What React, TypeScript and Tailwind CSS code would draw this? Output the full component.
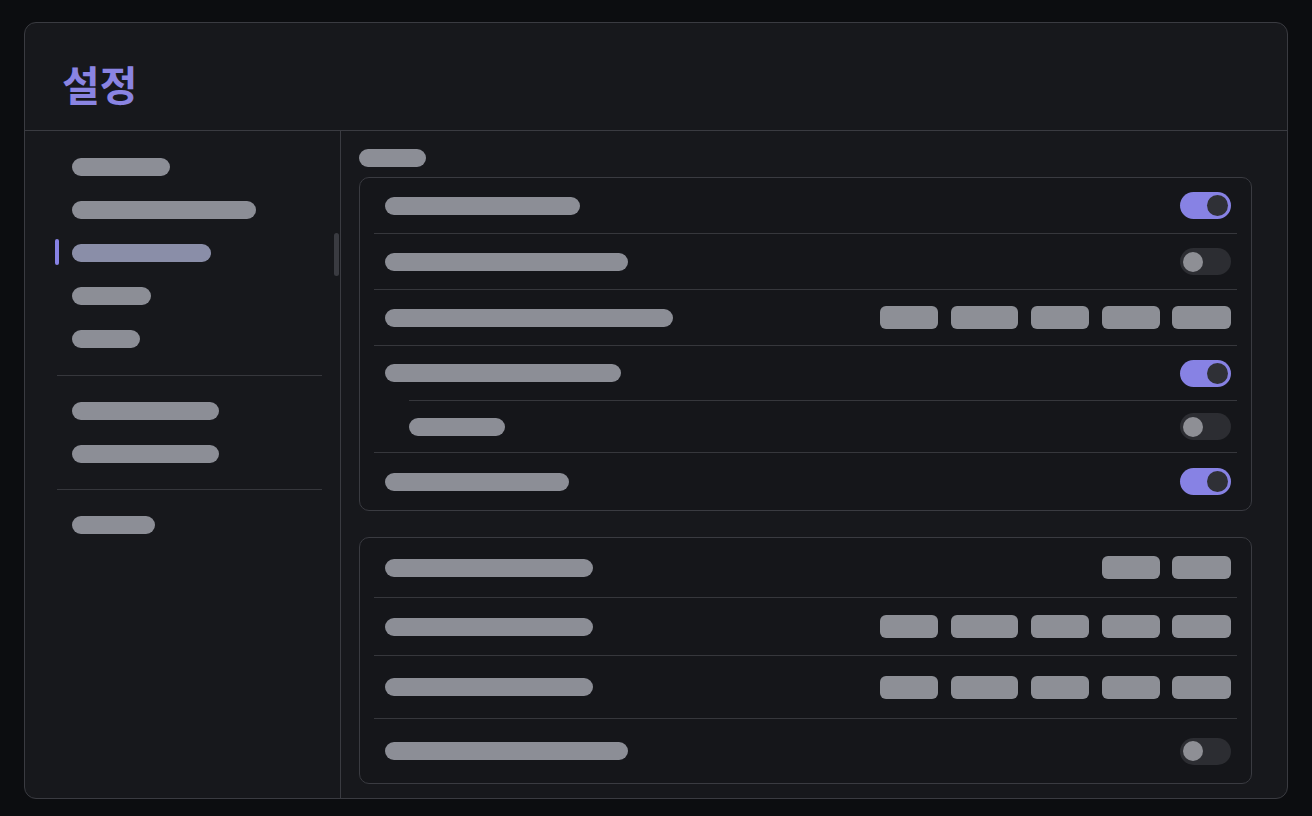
import React from 'react';

type Row =
  | { kind: 'toggle'; label: number; on: boolean; h: string; indent?: boolean }
  | { kind: 'chips'; label: number; chips: number[]; h: string };

const navTop = [98, 184, 139, 79, 68];
const navMid = [147, 147];
const navBottom = [83];

const cardOne: Row[] = [
  { kind: 'toggle', label: 195, on: true, h: 'h-[55px]' },
  { kind: 'toggle', label: 243, on: false, h: 'h-[56px]' },
  { kind: 'chips', label: 288, chips: [58, 67, 58, 58, 59], h: 'h-[56px]' },
  { kind: 'toggle', label: 236, on: true, h: 'h-[55px]' },
  { kind: 'toggle', label: 96, on: false, h: 'h-[52px]', indent: true },
  { kind: 'toggle', label: 184, on: true, h: 'h-[58px]' },
];

const cardTwo: Row[] = [
  { kind: 'chips', label: 208, chips: [58, 59], h: 'h-[59px]' },
  { kind: 'chips', label: 208, chips: [58, 67, 58, 58, 59], h: 'h-[58px]' },
  { kind: 'chips', label: 208, chips: [58, 67, 58, 58, 59], h: 'h-[63px]' },
  { kind: 'toggle', label: 243, on: false, h: 'h-[65px]' },
];

function Pill({ w, active = false }: { w: number; active?: boolean }) {
  return (
    <div
      className={`h-[18px] rounded-full ${active ? 'bg-[#8a8ea8]' : 'bg-[#8c8e96]'}`}
      style={{ width: w }}
    />
  );
}

function Toggle({ on }: { on: boolean }) {
  if (on) {
    return (
      <div className="flex h-[27px] w-[51px] items-center justify-end rounded-full bg-[#8782e4] pr-[3px]">
        <div className="h-[21px] w-[21px] rounded-full bg-[#2f3036]" />
      </div>
    );
  }
  return (
    <div className="flex h-[27px] w-[51px] items-center rounded-full bg-[#2c2d32] pl-[3px]">
      <div className="h-[20px] w-[20px] rounded-full bg-[#8e8f95]" />
    </div>
  );
}

function NavItem({ w, active = false }: { w: number; active?: boolean }) {
  return (
    <div className="relative flex h-[43px] items-center pl-[47px]">
      {active && (
        <div className="absolute left-[30px] top-[8px] h-[26px] w-[4px] rounded-full bg-[#8782e4]" />
      )}
      <Pill w={w} active={active} />
    </div>
  );
}

function Card({ rows }: { rows: Row[] }) {
  return (
    <div className="rounded-[10px] border border-[#3a3b41] bg-[#15161a] px-[14px]">
      {rows.map((row, i) => (
        <div
          key={i}
          className={`${row.h} flex items-center justify-between pr-[6px] ${
            i > 0 ? 'border-t border-[#36373c]' : ''
          } ${row.kind === 'toggle' && row.indent ? 'ml-[35px]' : 'pl-[11px]'}`}
        >
          <Pill w={row.label} />
          {row.kind === 'toggle' ? (
            <Toggle on={row.on} />
          ) : (
            <div className="flex gap-[13px]">
              {row.chips.map((c, j) => (
                <div
                  key={j}
                  className="h-[23px] rounded-[6px] bg-[#8d8f96] last:-ml-px"
                  style={{ width: c }}
                />
              ))}
            </div>
          )}
        </div>
      ))}
    </div>
  );
}

export default function App() {
  return (
    <div className="h-[816px] w-[1312px] bg-[#0c0d10] px-6 pt-[22px] font-['Noto_Sans','Noto_Sans_CJK_KR',sans-serif]">
      <div className="flex h-[777px] flex-col overflow-hidden rounded-[12px] border border-[#3a3b41] bg-[#17181c]">
        {/* Header */}
        <div className="flex h-[108px] shrink-0 items-center border-b border-[#3a3b41] pl-[37px] pt-[14px]">
          <h1 className="font-['Noto_Sans_CJK_KR',sans-serif] text-[41px] font-bold leading-none text-[#8a84e2]">
            설정
          </h1>
        </div>

        <div className="flex min-h-0 flex-1">
          {/* Sidebar */}
          <aside className="relative w-[316px] shrink-0 border-r border-[#3a3b41] pt-[14px]">
            {navTop.map((w, i) => (
              <NavItem key={i} w={w} active={i === 2} />
            ))}
            <div className="ml-[32px] mr-[18px] mt-[15px] mb-[13px] border-t border-[#36373c]" />
            {navMid.map((w, i) => (
              <NavItem key={i} w={w} />
            ))}
            <div className="ml-[32px] mr-[18px] mt-[14px] mb-[13px] border-t border-[#36373c]" />
            {navBottom.map((w, i) => (
              <NavItem key={i} w={w} />
            ))}
            <div className="absolute right-[1px] top-[102px] h-[43px] w-[5px] rounded-full bg-[#3a3b41]" />
          </aside>

          {/* Content */}
          <main className="flex-1 pl-[18px] pr-[35px] pt-[18px]">
            <Pill w={67} />
            <div className="mt-[10px]">
              <Card rows={cardOne} />
            </div>
            <div className="mt-[26px]">
              <Card rows={cardTwo} />
            </div>
          </main>
        </div>
      </div>
    </div>
  );
}
